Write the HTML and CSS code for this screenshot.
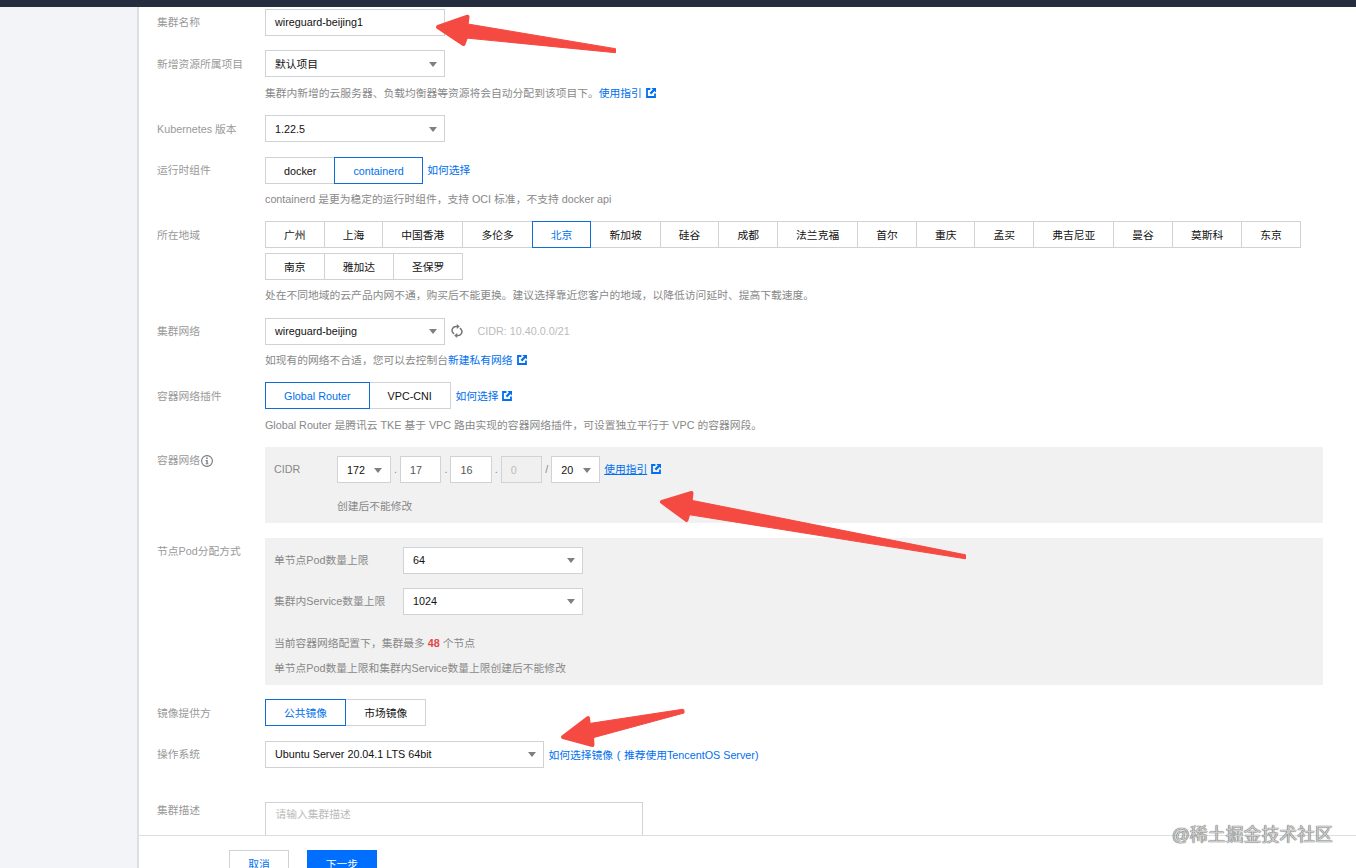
FILE: index.html
```html
<!DOCTYPE html>
<html lang="zh-CN">
<head>
<meta charset="utf-8">
<title>创建集群</title>
<link rel="stylesheet" href="styles.css">
</head>
<body>
<svg class="defs" width="0" height="0" aria-hidden="true">
  <symbol id="ext" viewBox="0 0 10 10">
    <path d="M4.4 1H1v8h8V5.6" fill="none" stroke="currentColor" stroke-width="1.8"/>
    <path d="M5.400 0H10v4.600L8.500 3.100 5.200 6.400 3.600 4.800 6.900 1.500z" fill="currentColor"/>
  </symbol>
</svg>
<div class="topbar"></div>
<div class="page">
  <aside class="side"></aside>
  <main class="main">
    <div class="form">
      <div class="label raised">集群名称</div>
      <div class="field"><div class="box w180">wireguard-beijing1</div></div>

      <div class="label">新增资源所属项目</div>
      <div class="field">
        <div class="box select cjk w180">默认项目</div>
        <p class="hint">集群内新增的云服务器、负载均衡器等资源将会自动分配到该项目下。<a>使用指引<svg class="ext"><use href="#ext"/></svg></a></p>
      </div>

      <div class="label">Kubernetes 版本</div>
      <div class="field"><div class="box select cjk w180">1.22.5</div></div>

      <div class="label raised">运行时组件</div>
      <div class="field">
        <div class="line"><div class="seg"><span>docker</span><span class="on">containerd</span></div><a class="lift">如何选择</a></div>
        <p class="hint up">containerd 是更为稳定的运行时组件，支持 OCI 标准，不支持 docker api</p>
      </div>

      <div class="label">所在地域</div>
      <div class="field">
        <div class="seg low"><span>广州</span><span>上海</span><span>中国香港</span><span>多伦多</span><span class="on">北京</span><span>新加坡</span><span>硅谷</span><span>成都</span><span>法兰克福</span><span>首尔</span><span>重庆</span><span>孟买</span><span>弗吉尼亚</span><span>曼谷</span><span>莫斯科</span><span>东京</span><span>南京</span><span>雅加达</span><span>圣保罗</span></div>
        <p class="hint up">处在不同地域的云产品内网不通，购买后不能更换。建议选择靠近您客户的地域，以降低访问延时、提高下载速度。</p>
      </div>

      <div class="label raised">集群网络</div>
      <div class="field">
        <div class="line"><div class="box select w180">wireguard-beijing</div>
          <svg class="refresh" viewBox="0 0 12 14"><g fill="none" stroke="#777" stroke-width="1.5"><path d="M6.800 2.500H5.400A3.900 3.900 0 0 0 1.800 8.600L3 10"/><path d="M5.200 11.500h1.400A3.900 3.900 0 0 0 10.200 5.400L9 4"/></g><path d="M5.800 0 8.800 2.500 5.800 5zM6.200 9 3.200 11.500 6.200 14z" fill="#777"/></svg>
          <span class="muted">CIDR: 10.40.0.0/21</span></div>
        <p class="hint up">如现有的网络不合适，您可以去控制台<a>新建私有网络<svg class="ext"><use href="#ext"/></svg></a></p>
      </div>

      <div class="label">容器网络插件</div>
      <div class="field">
        <div class="line"><div class="seg"><span class="on">Global Router</span><span>VPC-CNI</span></div><a>如何选择<svg class="ext"><use href="#ext"/></svg></a></div>
        <p class="hint">Global Router 是腾讯云 TKE 基于 VPC 路由实现的容器网络插件，可设置独立平行于 VPC 的容器网段。</p>
      </div>

      <div class="label raised info-label">容器网络<svg class="info" viewBox="0 0 12 12"><circle cx="6" cy="6" r="5.400" fill="none" stroke="#777" stroke-width="1.100"/><path d="M5.200 2.600h1.500v1.300H5.200zM4.600 5h2.100v3.400h.8v.9H4.500v-.9h.9V5.900h-.8z" fill="#777"/></svg></div>
      <div class="panel cidr">
        <div class="cidr-row">
          <span class="sub">CIDR</span>
          <div class="box select ip-a">172</div><i>.</i>
          <div class="box ip">17</div><i>.</i>
          <div class="box ip">16</div><i>.</i>
          <div class="box ip off">0</div><i>/</i>
          <div class="box select ip-m">20</div>
          <a class="u"><u>使用指引</u><svg class="ext"><use href="#ext"/></svg></a>
        </div>
        <p class="note">创建后不能修改</p>
      </div>

      <div class="label raised">节点Pod分配方式</div>
      <div class="panel pods">
        <div class="pod-row"><span>单节点Pod数量上限</span><div class="box select w180">64</div></div>
        <div class="pod-row"><span>集群内Service数量上限</span><div class="box select w180">1024</div></div>
        <p>当前容器网络配置下，集群最多 <b>48</b> 个节点</p>
        <p>单节点Pod数量上限和集群内Service数量上限创建后不能修改</p>
      </div>

      <div class="label">镜像提供方</div>
      <div class="field"><div class="seg low"><span class="on">公共镜像</span><span>市场镜像</span></div></div>

      <div class="label raised">操作系统</div>
      <div class="field"><div class="line"><div class="box select os">Ubuntu Server 20.04.1 LTS 64bit</div><a class="os-link">如何选择镜像<span class="paren">(</span>推荐使用TencentOS Server)</a></div></div>

      <div class="label desc-label">集群描述</div>
      <div class="field"><div class="area">请输入集群描述</div></div>
    </div>
    <footer class="footer"><div class="btn">取消</div><div class="btn primary">下一步</div></footer>
  </main>
</div>
<svg class="arrows" viewBox="0 0 1356 868">
  <g fill="#f54a42" stroke="#f54a42" stroke-linejoin="round">
    <path stroke-width="4" d="M438 27 467.500 16.700 466.500 25.500 466 37 463.500 44z"/>
    <path stroke-width="1" d="M466 23.700 615.500 48.700V52.700L466 38z"/>
    <path stroke-width="4" d="M662 502 691.500 493 690.500 502 688.500 513 686.500 520z"/>
    <path stroke-width="1" d="M690 500 965.500 554.800V558.800L688 514.500z"/>
    <path stroke-width="4" d="M563 737 588 718 589 727 592 736 592.500 745z"/>
    <path stroke-width="1" d="M588 723.700 682.500 709.300Q684 709.300 684 710.500V713L592 738z"/>
  </g>
</svg>
<div class="mark">@稀土掘金技术社区</div>
</body>
</html>
```
FILE: styles.css
```css
* { box-sizing: border-box; }
body {
  margin: 0;
  width: 1356px;
  height: 868px;
  overflow: hidden;
  position: relative;
  background: #fff;
  color: #888;
  font: 10.78px/16px "Liberation Sans", "Noto Sans CJK SC", sans-serif;
}
p { margin: 0; }
a { color: #0070ee; }
.defs { position: absolute; }
.topbar { height: 7px; background: #242e3f; }
.page { display: flex; height: 861px; }
.side { width: 139px; background: #f2f4f8; border-right: 2px solid #dcdfe4; }
.main { flex: 1; display: flex; flex-direction: column; }
.form {
  height: 828px;
  overflow: hidden;
  padding: 2px 33px 0 18px;
  display: grid;
  grid-template-columns: 108px 1058px;
  grid-template-rows: 41px 65px 42px 64px 97px 64px 65px 91px 161px 42px 61px 60px;
}
.label { padding-top: 6px; color: #999; white-space: nowrap; }
.label.raised { padding-top: 5px; }
.info-label { display: flex; align-items: flex-start; }
.info { width: 12px; height: 12px; margin: 3px 0 0 1px; }
.label.desc-label { padding-top: 0; }
.box {
  height: 27px;
  border: 1px solid #cfd3d6;
  background: #fff;
  color: #111;
  padding: 0 9px;
  line-height: 25px;
  white-space: nowrap;
}
.w180 { width: 180px; }
.select { display: flex; align-items: center; justify-content: space-between; padding-right: 7px; }
.select.cjk { padding-top: 1px; }
.select::after {
  content: "";
  border: 4px solid transparent;
  border-top: 5px solid #808080;
  border-bottom: 0;
}
.hint { margin-top: 8px; white-space: nowrap; }
.hint.up { margin-top: 7px; }
.ext { width: 10px; height: 10px; margin-left: 4px; vertical-align: -1px; }
.line { display: flex; align-items: center; }
.line > a { margin-left: 4.5px; }
.line > a.lift { margin-top: -1px; }
.seg { display: flex; flex-wrap: wrap; row-gap: 5px; padding-left: 1px; }
.seg span {
  height: 27px;
  padding: 0 18.06px;
  margin-left: -1px;
  border: 1px solid #cfd3d6;
  line-height: 26px;
  color: #111;
  white-space: nowrap;
}
.seg.low span { line-height: 27px; }
.seg span.on { border-color: #0f6ed6; color: #0070ee; position: relative; }
.refresh { width: 12px; height: 14px; margin: -1px 0 0 6px; }
.muted { color: #bbb; margin: -1px 0 0 14.5px; }
.panel { background: #f1f1f1; }
.cidr { height: 76px; padding: 9px 9px 0; }
.cidr-row { display: flex; }
.cidr-row .sub { width: 63px; padding-top: 5px; }
.cidr-row i { width: 9px; text-align: center; font-style: normal; padding-top: 5px; }
.cidr-row .box { line-height: 27px; }
.cidr-row .select { padding: 1px 8px 0 9px; }
.ip-a { width: 54px; }
.ip { width: 41.4px; }
.box.ip { color: #555; }
.box.ip.off { color: #bbb; background: #f0f0f0; }
.ip-m { width: 49px; }
.u { margin-left: 4px; padding-top: 5px; }
.note { margin: 15px 0 0 63px; }
.pods { height: 147px; padding: 9px 9px 0; }
.pod-row { display: flex; height: 41px; }
.pod-row span { width: 129px; padding-top: 5px; }
.pods p { height: 25px; padding-top: 6px; }
.pods b { color: #e54545; }
.os { width: 279px; }
.os-link { padding-top: 1px; }
.paren { display: inline-block; width: 10.8px; text-align: center; }
.area { width: 378px; height: 70px; border: 1px solid #cfd3d6; padding: 3px 9.5px; color: #bbb; }
.footer { height: 33px; border-top: 1px solid #dcdfe2; padding: 14px 0 0 90px; display: flex; gap: 18px; }
.btn { width: 60px; height: 27px; border: 1px solid #cfd3d6; text-align: center; line-height: 27px; color: #0070ee; }
.primary { width: 70px; background: #006eff; border-color: #006eff; color: #fff; }
.arrows { position: absolute; left: 0; top: 0; width: 1356px; height: 868px; }
.mark {
  position: absolute;
  right: 23px;
  top: 823px;
  font-size: 17.9px;
  line-height: 24px;
  color: #ccc;
  text-shadow: 0 0 1px #555, 0 0 1px #666;
}
```
